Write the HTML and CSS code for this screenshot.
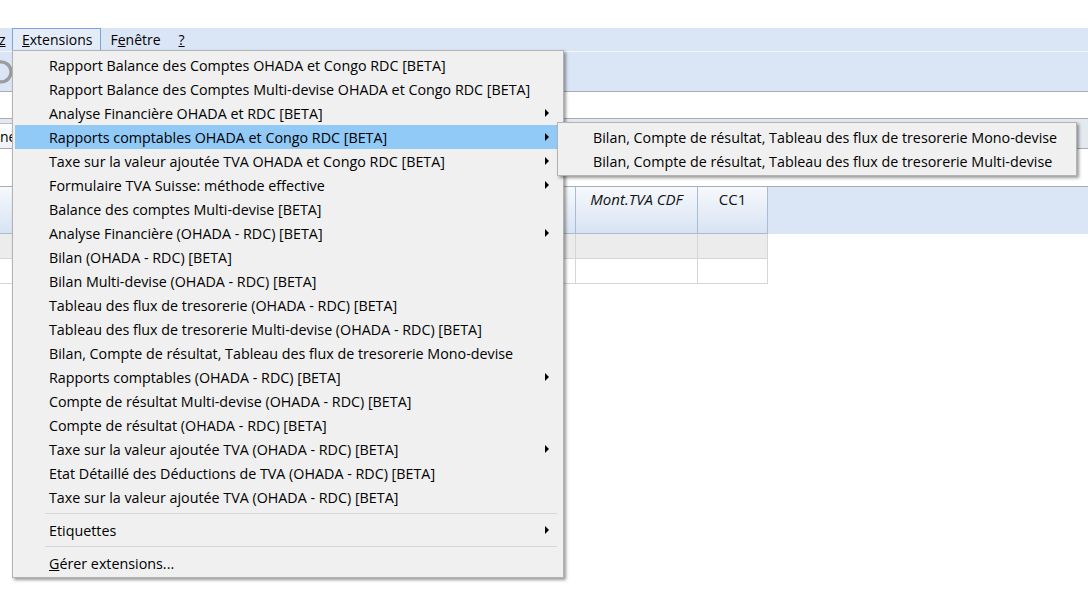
FILE: index.html
```html
<!DOCTYPE html>
<html lang="fr">
<head>
<meta charset="utf-8">
<title>Extensions</title>
<link rel="stylesheet" href="styles.css">
</head>
<body>
<div class="screen">
  <div class="topgap"></div>
  <div class="menubar">
    <span class="mb-item mb-cut"><u>z</u></span>
    <span class="mb-item mb-open"><u>E</u>xtensions</span>
    <span class="mb-item">F<u>e</u>nêtre</span>
    <span class="mb-item"><u>?</u></span>
  </div>
  <div class="toolbar">
    <svg class="tb-icon" width="26" height="26" viewBox="0 0 26 26">
      <path d="M5 8 A10 10 0 1 1 6 21" fill="none" stroke="#9c9c9c" stroke-width="3.4"/>
      <path d="M0 4 L10 5 L4 13 Z" fill="#9c9c9c"/>
    </svg>
  </div>
  <div class="field"></div>
  <div class="tabstrip"><span class="tab">ner</span></div>
  <div class="blank"></div>
  <div class="grid">
    <div class="grid-head">
      <div class="hcell c-first"></div>
      <div class="hcell c-mont"><i>Mont.TVA CDF</i></div>
      <div class="hcell c-cc1">CC1</div>
      <div class="hrest"></div>
    </div>
    <div class="grid-row alt">
      <div class="cell c-first"></div>
      <div class="cell c-mont"></div>
      <div class="cell c-cc1"></div>
    </div>
    <div class="grid-row">
      <div class="cell c-first"></div>
      <div class="cell c-mont"></div>
      <div class="cell c-cc1"></div>
    </div>
  </div>

  <div class="menu main-menu">
    <div class="mi"><span>Rapport Balance des Comptes OHADA et Congo RDC [BETA]</span></div>
    <div class="mi"><span>Rapport Balance des Comptes Multi-devise OHADA et Congo RDC [BETA]</span></div>
    <div class="mi"><span>Analyse Financière OHADA et RDC [BETA]</span><i class="arrow"></i></div>
    <div class="mi active"><span>Rapports comptables OHADA et Congo RDC [BETA]</span><i class="arrow"></i></div>
    <div class="mi"><span>Taxe sur la valeur ajoutée TVA OHADA et Congo RDC [BETA]</span><i class="arrow"></i></div>
    <div class="mi"><span>Formulaire TVA Suisse: méthode effective</span><i class="arrow"></i></div>
    <div class="mi"><span>Balance des comptes Multi-devise [BETA]</span></div>
    <div class="mi"><span>Analyse Financière (OHADA - RDC) [BETA]</span><i class="arrow"></i></div>
    <div class="mi"><span>Bilan (OHADA - RDC) [BETA]</span></div>
    <div class="mi"><span>Bilan Multi-devise (OHADA - RDC) [BETA]</span></div>
    <div class="mi"><span>Tableau des flux de tresorerie (OHADA - RDC) [BETA]</span></div>
    <div class="mi"><span>Tableau des flux de tresorerie Multi-devise (OHADA - RDC) [BETA]</span></div>
    <div class="mi"><span>Bilan, Compte de résultat, Tableau des flux de tresorerie Mono-devise</span></div>
    <div class="mi"><span>Rapports comptables (OHADA - RDC) [BETA]</span><i class="arrow"></i></div>
    <div class="mi"><span>Compte de résultat Multi-devise (OHADA - RDC) [BETA]</span></div>
    <div class="mi"><span>Compte de résultat (OHADA - RDC) [BETA]</span></div>
    <div class="mi"><span>Taxe sur la valeur ajoutée TVA (OHADA - RDC) [BETA]</span><i class="arrow"></i></div>
    <div class="mi"><span>Etat Détaillé des Déductions de TVA (OHADA - RDC) [BETA]</span></div>
    <div class="mi"><span>Taxe sur la valeur ajoutée TVA (OHADA - RDC) [BETA]</span></div>
    <div class="sep"></div>
    <div class="mi"><span>Etiquettes</span><i class="arrow"></i></div>
    <div class="sep"></div>
    <div class="mi"><span><u>G</u>érer extensions...</span></div>
  </div>

  <div class="menu sub-menu">
    <div class="mi"><span>Bilan, Compte de résultat, Tableau des flux de tresorerie Mono-devise</span></div>
    <div class="mi"><span>Bilan, Compte de résultat, Tableau des flux de tresorerie Multi-devise</span></div>
  </div>
</div>
</body>
</html>
```

FILE: styles.css
```css
* { box-sizing: border-box; }

html, body {
  margin: 0;
  padding: 0;
  background: #ffffff;
}

body {
  font-family: "Open Sans", "Noto Sans", "DejaVu Sans", sans-serif;
  color: #000;
}

.screen {
  position: relative;
  width: 1088px;
  height: 604px;
  overflow: hidden;
  background: #ffffff;
}

.topgap { height: 28px; }

/* menubar */
.menubar {
  height: 23px;
  background: #dae5f5;
  display: flex;
  align-items: stretch;
  font-size: 14px;
}

.mb-item {
  display: flex;
  align-items: center;
  padding: 0 8px 1px 8px;
  border: 1px solid transparent;
  white-space: nowrap;
}

.mb-cut {
  margin-left: -1px;
  width: 13px;
  padding: 0 0 1px 0;
  border: none;
}

.mb-open {
  padding-left: 9px;
  border-color: #7ca5d6;
  background: #e3ecf8;
}

/* toolbar */
.toolbar {
  height: 41px;
  background: #dae5f5;
  border-top: 1px solid #f3f7fc;
  border-bottom: 1px solid #a8acb2;
  display: flex;
  align-items: center;
}

.tb-icon {
  margin-left: -12px;
  margin-top: -2px;
}

.field {
  height: 27px;
  background: #ffffff;
  border-bottom: 1px solid #a8acb2;
}

.tabstrip {
  height: 30px;
  background: #e4e8ef;
  border-bottom: 1px solid #a8acb2;
  display: flex;
  align-items: flex-end;
  padding-top: 4px;
}

.tab {
  height: 100%;
  width: 80px;
  margin-left: -1px;
  padding-left: 0;
  font-size: 14px;
  display: flex;
  align-items: center;
  background: linear-gradient(#ffffff, #eef2f8);
  border: 1px solid #b8bfca;
  border-bottom: none;
}

.blank {
  height: 38px;
  background: #ffffff;
  border-bottom: 1px solid #a8acb2;
}

/* grid */
.grid-head {
  display: flex;
  height: 47px;
  background: #dae5f5;
  font-size: 15px;
}

.hcell {
  background: linear-gradient(#f6f9fd, #d8e3f2);
  border-right: 1px solid #a9bcd6;
  border-bottom: 1px solid #a9bcd6;
  text-align: center;
  padding-top: 2px;
  color: #111;
}

.hrest {
  flex: 1;
}

.c-first { width: 576px; }
.c-mont { width: 122px; }
.c-cc1 { width: 70px; }

.grid-row {
  display: flex;
  height: 25px;
}

.cell {
  border-right: 1px solid #d6d6d6;
  border-bottom: 1px solid #d6d6d6;
  background: #ffffff;
}

.grid-row.alt .cell { background: #ececec; }

/* popup menus */
.menu {
  position: absolute;
  background: #f0f0f0;
  border: 1px solid #b3b3b3;
  padding: 2px 6px 2px 2px;
  box-shadow: 2px 2px 3px rgba(0, 0, 0, 0.4);
  font-size: 14.3px;
}

.main-menu {
  left: 12px;
  top: 50px;
  width: 552px;
}

.sub-menu {
  left: 557px;
  top: 122px;
  width: 520px;
}

.mi {
  height: 24px;
  display: flex;
  align-items: center;
  padding-left: 34px;
  white-space: nowrap;
}

.sub-menu .mi { padding-left: 33px; }

.mi.active { background: #91c9f7; }

.arrow {
  margin-left: auto;
  margin-right: 8px;
  width: 0;
  height: 0;
  border-left: 4px solid #000;
  border-top: 4px solid transparent;
  border-bottom: 4px solid transparent;
}

.sep {
  height: 9px;
  margin-left: 30px;
  display: flex;
  align-items: center;
}

.sep::before {
  content: "";
  flex: 1;
  height: 1px;
  background: #d7d7d7;
}
```
